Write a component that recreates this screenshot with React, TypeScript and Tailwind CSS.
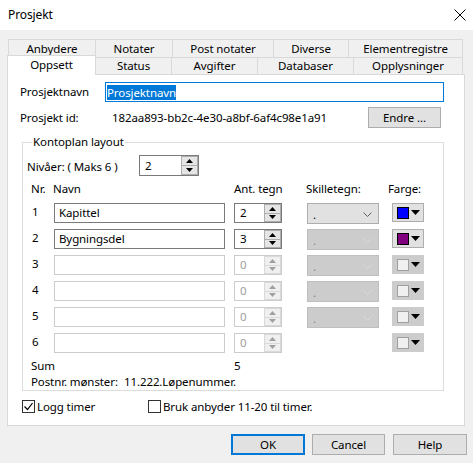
import React from "react";

const Tri = ({ up, color }: { up?: boolean; color: string }) => (
  <svg width="7" height="4" viewBox="0 0 7 4">
    {up ? <path d="M0 4 L3.5 0 L7 4 Z" fill={color} /> : <path d="M0 0 L7 0 L3.5 4 Z" fill={color} />}
  </svg>
);

const SpinButtons = ({ enabled }: { enabled: boolean }) => {
  const c = enabled ? "#000" : "#a0a0a0";
  const cls = enabled
    ? "flex-1 flex items-center justify-center bg-[#e5e5e5] border border-[#adadad]"
    : "flex-1 flex items-center justify-center bg-[#f0f0f0] border border-[#d9d9d9]";
  return (
    <div className="flex flex-col w-[17px] h-full">
      <div className={cls}>
        <Tri up color={c} />
      </div>
      <div className={cls + " -mt-[1px]"}>
        <Tri color={c} />
      </div>
    </div>
  );
};

const Spin = ({ value, enabled, w }: { value: string; enabled: boolean; w: string }) => (
  <div
    className={
      (enabled ? "border-[#7a7a7a] text-black" : "border-[#cccccc] text-[#a0a0a0]") +
      " flex h-full border bg-white " +
      w
    }
  >
    <div className="flex-1 flex items-center pl-[5px]">{value}</div>
    <SpinButtons enabled={enabled} />
  </div>
);

const Combo = ({ enabled }: { enabled: boolean }) => (
  <div
    className={
      (enabled ? "bg-[#e1e1e1] border-[#adadad] text-black" : "bg-[#cccccc] border-[#bfbfbf] text-[#838383]") +
      " w-[72px] h-[21px] border flex items-end justify-between pl-[5px] pr-[6px] pb-[3px]"
    }
  >
    <span className="leading-none">.</span>
    <svg width="9" height="5" viewBox="0 0 9 5" className="mb-[3px]">
      <path d="M0.5 0.5 L4.5 4.5 L8.5 0.5" fill="none" stroke={enabled ? "#606060" : "#dadada"} strokeWidth="1" />
    </svg>
  </div>
);

const ColorBtn = ({ color, enabled }: { color: string; enabled: boolean }) => (
  <div
    className={
      (enabled ? "bg-[#e1e1e1] border-[#adadad]" : "bg-[#cccccc] border-[#cccccc]") +
      " w-[32px] h-[19px] border flex items-center pl-[4px] gap-[2px]"
    }
  >
    <div
      className={(enabled ? "border-black" : "border-[#a0a0a0]") + " w-[12px] h-[12px] border"}
      style={{ backgroundColor: color }}
    />
    <svg width="9" height="5" viewBox="0 0 9 5">
      <path d="M0 0 L9 0 L4.5 5 Z" fill="#000" />
    </svg>
  </div>
);

const rows = [
  { n: "1", name: "Kapittel", ant: "2", en: true, combo: "on", color: "#0000ff" },
  { n: "2", name: "Bygningsdel", ant: "3", en: true, combo: "off", color: "#800080" },
  { n: "3", name: "", ant: "0", en: false, combo: "off", color: "#f0f0f0" },
  { n: "4", name: "", ant: "0", en: false, combo: "off", color: "#f0f0f0" },
  { n: "5", name: "", ant: "0", en: false, combo: "off", color: "#f0f0f0" },
  { n: "6", name: "", ant: "0", en: false, combo: "none", color: "#f0f0f0" },
];

const Tab = ({ label, w, first }: { label: string; w: string; first?: boolean }) => (
  <div
    className={
      (first ? "border-l " : "") +
      "h-full border-t border-r border-[#d9d9d9] bg-[#f0f0f0] flex items-center justify-center " +
      w
    }
  >
    {label}
  </div>
);

export default function App() {
  return (
    <div className="w-[473px] h-[463px] bg-[#f0f0f0] text-black text-[11.5px] tracking-[-0.1px] leading-[16px] font-['Noto_Sans',sans-serif] overflow-hidden">
      {/* Title bar */}
      <div className="h-[30px] bg-white flex items-center justify-between pl-[8px] pr-[7px]">
        <span className="text-[12px]">Prosjekt</span>
        <svg width="12" height="12" viewBox="0 0 12 12">
          <path d="M0.5 0.5 L11.5 11.5 M11.5 0.5 L0.5 11.5" stroke="#000" strokeWidth="1" />
        </svg>
      </div>

      {/* Tabs */}
      <div className="pt-[9px]">
        <div className="flex h-[18px] pl-[8px]">
          <Tab label="Anbydere" w="w-[88px]" first />
          <Tab label="Notater" w="w-[77px]" />
          <Tab label="Post notater" w="w-[101px]" />
          <Tab label="Diverse" w="w-[75px]" />
          <Tab label="Elementregistre" w="w-[114px]" />
        </div>
        <div className="flex h-[17px] pl-[7px] items-start relative z-10">
          <div className="w-[89px] h-[20px] -mt-[2px] border-l border-t border-r border-[#d9d9d9] bg-white flex items-center justify-center pb-[2px]">
            Oppsett
          </div>
          <Tab label="Status" w="w-[76px]" />
          <Tab label="Avgifter" w="w-[86px]" />
          <Tab label="Databaser" w="w-[96px]" />
          <Tab label="Opplysninger" w="w-[109px]" />
        </div>
      </div>

      {/* Panel */}
      <div className="ml-[7px] w-[458px] h-[352px] border border-[#d9d9d9] bg-white pt-[7px] pl-[12px]">
        <div className="flex items-center h-[20px]">
          <span className="w-[85px]">Prosjektnavn</span>
          <div className="w-[339px] h-[20px] border border-[#0078d7] flex items-center pl-[1px]">
            <span className="bg-[#0078d7] text-white leading-[15px]">Prosjektnavn</span>
          </div>
        </div>
        <div className="flex items-center h-[21px] mt-[5px]">
          <span className="w-[92px]">Prosjekt id:</span>
          <span className="w-[256px]">182aa893-bb2c-4e30-a8bf-6af4c98e1a91</span>
          <div className="w-[73px] h-[21px] bg-[#e1e1e1] border border-[#adadad] flex items-center justify-center">
            Endre ...
          </div>
        </div>

        {/* Group box */}
        <fieldset className="mt-[6px] ml-[2px] w-[422px] h-[257px] border border-[#dcdcdc] pl-[4px]">
          <legend className="ml-[5px] px-[1px] leading-[16px]">Kontoplan layout</legend>
          <div className="flex items-center h-[21px] mt-[5px]">
            <span className="w-[112px] pt-[3px]">Nivåer: ( Maks 6 )</span>
            <Spin value="2" enabled w="w-[60px]" />
          </div>
          <div className="flex h-[16px] mt-[5px] pl-[4px]">
            <span className="w-[22px]">Nr.</span>
            <span className="w-[181px]">Navn</span>
            <span className="w-[72px]">Ant. tegn</span>
            <span className="w-[82px]">Skilletegn:</span>
            <span>Farge:</span>
          </div>
          <div className="mt-[6px] flex flex-col gap-[6px]">
            {rows.map((r) => (
              <div key={r.n} className="flex items-start h-[20px] pl-[5px]">
                <span className="w-[22px] pt-[1px]">{r.n}</span>
                <div
                  className={
                    (r.en ? "border-[#7a7a7a]" : "border-[#cccccc]") +
                    " w-[171px] h-[20px] border flex items-center pl-[4px]"
                  }
                >
                  {r.name}
                </div>
                <div className="ml-[9px] h-[20px]">
                  <Spin value={r.ant} enabled={r.en} w="w-[48px]" />
                </div>
                <div className="ml-[25px] w-[72px]">
                  {r.combo !== "none" && <Combo enabled={r.combo === "on"} />}
                </div>
                <div className="ml-[13px]">
                  <ColorBtn color={r.color} enabled={r.en} />
                </div>
              </div>
            ))}
          </div>
          <div className="flex h-[16px] mt-[5px] pl-[4px]">
            <span className="w-[203px]">Sum</span>
            <span>5</span>
          </div>
          <div className="flex h-[16px] pl-[4px]">
            <span className="w-[93px]">Postnr. mønster:</span>
            <span>11.222.Løpenummer.</span>
          </div>
        </fieldset>

        {/* Checkboxes */}
        <div className="flex items-center h-[13px] mt-[9px] pl-[2px]">
          <div className="w-[13px] h-[13px] border border-[#333333] flex items-center justify-center">
            <svg width="11" height="11" viewBox="0 0 11 11">
              <path d="M1.5 5.5 L4.5 8.5 L9.5 2" fill="none" stroke="#000" strokeWidth="1.2" />
            </svg>
          </div>
          <span className="ml-[2px] w-[111px]">Logg timer</span>
          <div className="w-[13px] h-[13px] border border-[#333333]" />
          <span className="ml-[2px]">Bruk anbyder 11-20 til timer.</span>
        </div>
      </div>

      {/* Buttons */}
      <div className="flex justify-end mt-[8px] pr-[6px]">
        <div className="w-[74px] h-[21px] bg-[#e1e1e1] border-2 border-[#0078d7] flex items-center justify-center">
          OK
        </div>
        <div className="ml-[7px] w-[73px] h-[21px] bg-[#e1e1e1] border border-[#adadad] flex items-center justify-center">
          Cancel
        </div>
        <div className="ml-[8px] w-[74px] h-[21px] bg-[#e1e1e1] border border-[#adadad] flex items-center justify-center">
          Help
        </div>
      </div>
    </div>
  );
}
